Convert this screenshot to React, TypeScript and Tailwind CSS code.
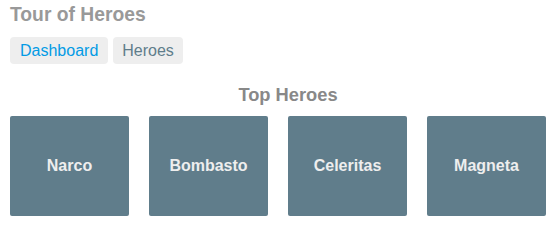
const heroes = ['Narco', 'Bombasto', 'Celeritas', 'Magneta']

export default function App() {
  return (
    <div className="min-h-[232px] bg-white px-[10px] font-['Liberation_Sans',Arial,sans-serif]">
      <h1 className="pt-[4px] text-[19.3px] font-bold leading-[22px] text-[#999]">Tour of Heroes</h1>

      <nav className="mt-[11px] flex gap-[5px]">
        <a className="rounded-[4px] bg-[#eee] px-[10px] py-[5px] text-[16px] leading-[17px] text-[#039be5]">Dashboard</a>
        <a className="rounded-[4px] bg-[#eee] px-[9px] py-[5px] text-[16px] leading-[17px] text-[#607d8b]">Heroes</a>
      </nav>

      <div className="w-[556px]">
        <h3 className="mt-[21px] text-center text-[18.3px] font-bold leading-[20px] text-[#888]">Top Heroes</h3>
        <div className="mt-[11px] flex">
          {heroes.map((name) => (
            <div key={name} className="w-[139px] pr-[20px]">
              <div className="flex h-[100px] items-center justify-center rounded-[2px] bg-[#607d8b] text-[16px] font-bold text-[#eee]">
                {name}
              </div>
            </div>
          ))}
        </div>
      </div>
    </div>
  )
}
